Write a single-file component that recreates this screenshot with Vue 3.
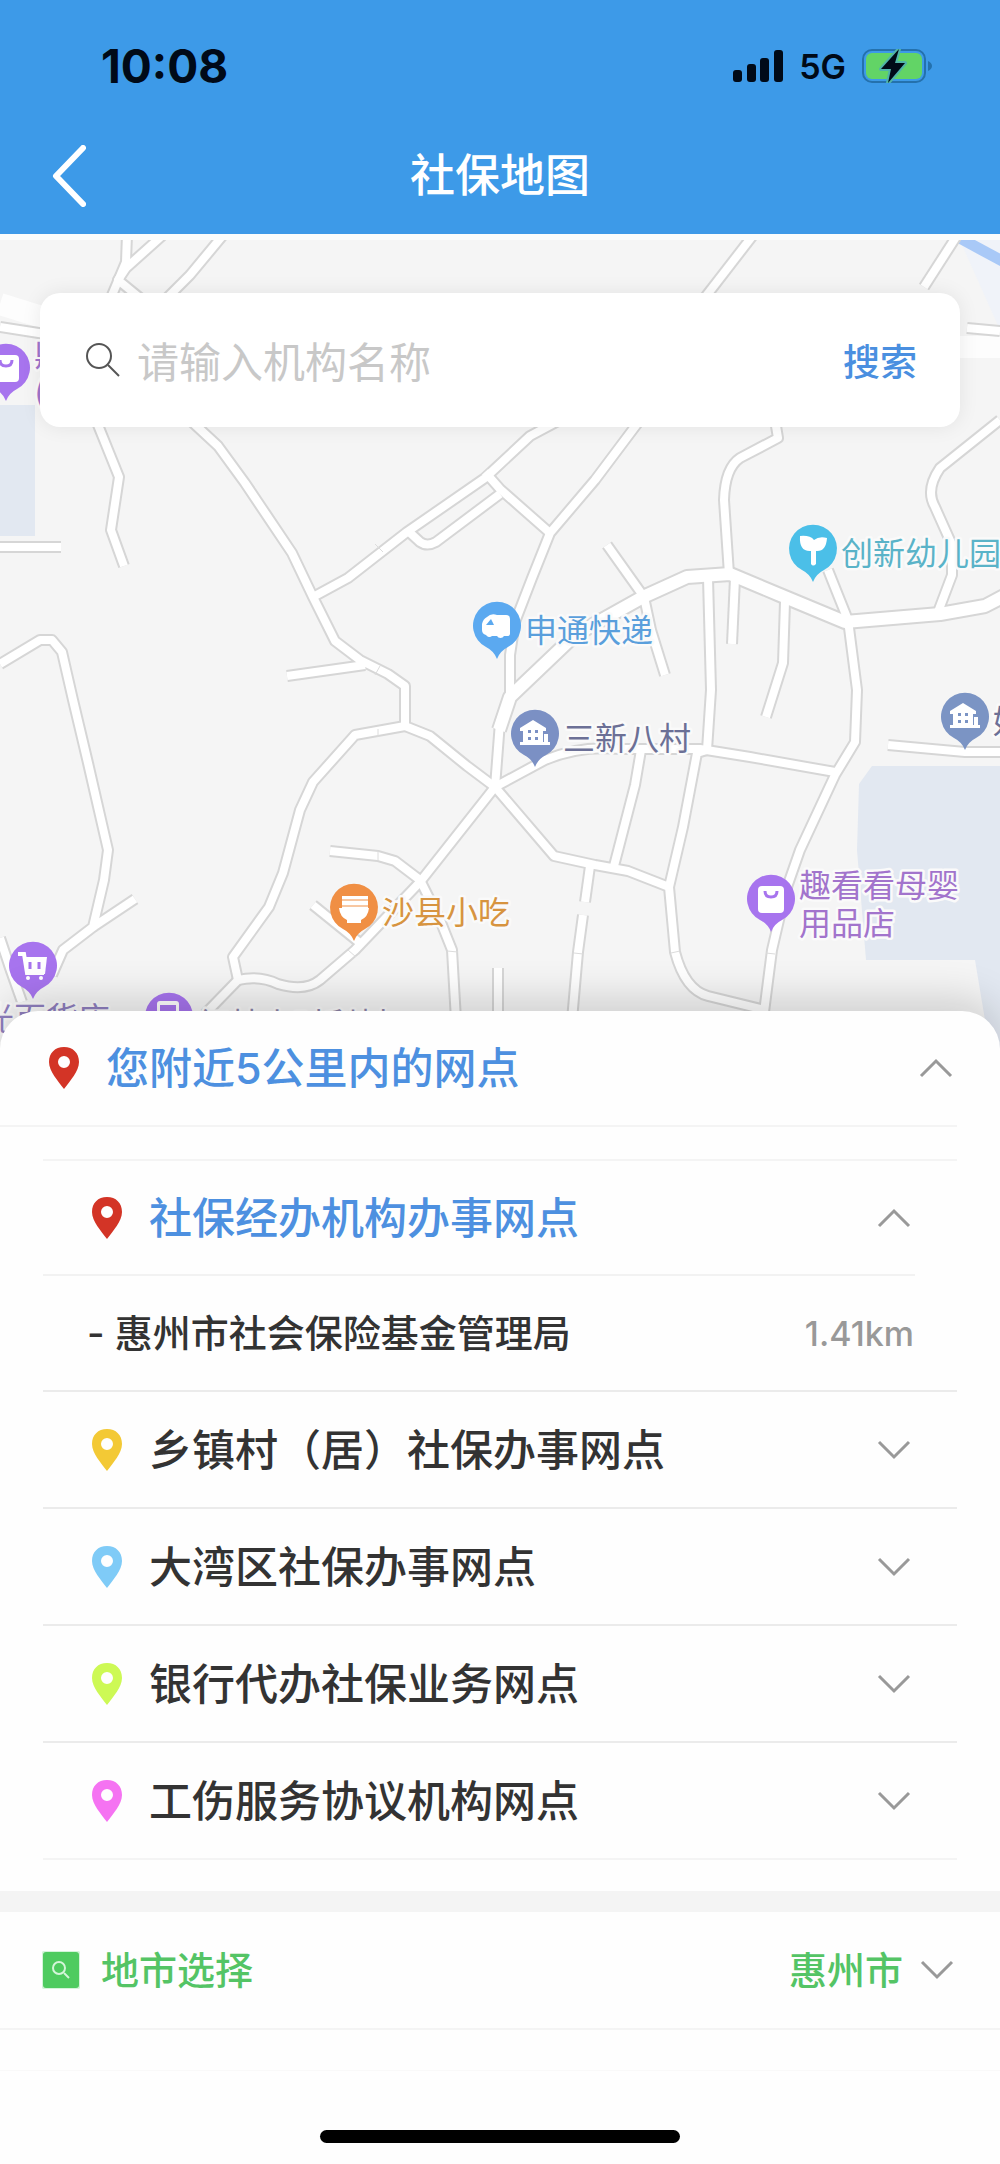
<!-- 社保地图页面：顶部导航 + 地图 + 网点列表 -->
<script setup>
    import { ref } from 'vue'

    const keyword = ref('')
    const city = ref('惠州市')
    const cities = ['惠州市', '广州市', '深圳市']

    const nearbyOpen = ref(true)//附近网点是否展开

    const groups = ref([
        { title: '社保经办机构办事网点', color: '#d33426', open: true, points: [{ name: '惠州市社会保险基金管理局', distance: '1.41km' }] },
        { title: '乡镇村（居）社保办事网点', color: '#f3c935', open: false, points: [] },
        { title: '大湾区社保办事网点', color: '#7fcbf7', open: false, points: [] },
        { title: '银行代办社保业务网点', color: '#cdf955', open: false, points: [] },
        { title: '工伤服务协议机构网点', color: '#f573f2', open: false, points: [] }
    ])

    const togglePanel = (group) => {
        group.open = !group.open
    }

    // 地图道路
    const roads = [
        'M96 420L119 477L111 530L124 566',
        'M0 547H61',
        'M190 420L218 446L245 483L292 553L313 597L335 641L360 660L388 674L405 686V726L430 736L467 766L495 787',
        'M313 597L348 578L407 532L485 478L530 436L560 420',
        'M485 472L500 489L550 533',
        'M407 530L420 542Q427 547 436 542L500 494',
        'M287 676L365 665',
        'M0 664L40 640H52L62 652L73 700L88 763L108 850L104 880L93 927L63 950L52 975',
        'M93 927L135 899',
        'M0 938L10 968L22 1002',
        'M405 726L355 735L313 782L300 810L283 873L269 907L233 957L238 980Q260 975 278 984Q305 992 320 980L355 950L420 882L495 787',
        'M238 980L205 1014',
        'M330 851L378 856L395 861L420 880L440 920L452 950L456 1020',
        'M313 905L360 943',
        'M640 420L595 480L550 533L532 578L515 622L510 655V695L500 722L495 787',
        'M607 545L644 597L651 630L665 675',
        'M775 420L778 438L740 458Q725 468 724 500L729 574',
        'M708 578L711 690L707 750L697 753L683 827L669 887',
        'M735 578L732 644',
        'M785 602L783 663L766 717',
        'M828 570L848 620L857 690L855 742L835 775L800 850L786 890L772 950L763 1020',
        'M1000 420L940 468Q925 490 935 507L952 545V575L938 612',
        'M495 787L545 760Q580 745 620 749H700L750 757L835 772',
        'M495 787L554 856L595 865L628 871L669 887L675 952Q685 990 708 996L765 1010',
        'M641 750L635 785L614 866',
        'M590 866L585 902',
        'M583 915L578 952L572 1020',
        'M888 745L965 752H1000',
        'M498 968V1020',
        'M127 234L126 262L110 300',
        'M164 234L126 268L118 280L140 298',
        'M224 234L190 275L165 300',
        'M754 234L703 300',
        'M958 234L924 287',
        'M967 328L1000 331',
        'M0 327L45 334'
    ]
    const mainRoad = 'M499 730L510 697L575 635L643 597L687 577L730 574L780 595L845 622L940 614L985 606L1004 596'

    // 道路上的分段标记
    const joints = 'M375 544L383 552M375 675L380 666M378 729V737M378 851V861M348 950L356 957M447 951L458 952M671 953L680 951M766 953L775 954M574 953L583 954'

    // 地图标注，dx、dy 为文字相对默认位置的偏移
    const places = [
        { x: 497, y: 626, type: 'truck', color: '#5ba9f0', text: '#5a9fdc', lines: ['申通快递'] },
        { x: 813, y: 549, type: 'sprout', color: '#4bbfe8', text: '#5ab3c8', lines: ['创新幼儿园'] },
        { x: 535, y: 734, type: 'house', color: '#7b90c4', text: '#6c7096', lines: ['三新八村'] },
        { x: 965, y: 717, type: 'house', color: '#7b94c4', text: '#6c7096', lines: ['好'] },
        { x: 354, y: 908, type: 'bowl', color: '#f08f44', text: '#d79440', lines: ['沙县小吃'] },
        { x: 771, y: 899, type: 'bag', color: '#a774ee', text: '#a274cc', lines: ['趣看看母婴', '用品店'] },
        { x: 6, y: 368, type: 'bag', color: '#a774ee', text: '#a274cc', lines: ['鼎', '(惠)'] },
        { x: 33, y: 966, type: 'cart', color: '#a774ee', text: '#9080c0', lines: ['光百货店'], dx: -79, dy: 48 },
        { x: 169, y: 1017, type: 'phone', color: '#a774ee', text: '#8d84a8', lines: ['红林小时利村'], dx: 0, dy: 3 }
    ]
</script>

<template>
    <div class="page">
        <header class="header">
            <div class="status-bar">
                <span class="time">10:08</span>
                <div class="status-icons">
                    <svg class="signal" viewBox="0 0 50 32" aria-hidden="true">
                        <rect x="0" y="20" width="9" height="12" rx="3" />
                        <rect x="14" y="14" width="9" height="18" rx="3" />
                        <rect x="27" y="8" width="9" height="24" rx="3" />
                        <rect x="41" y="0" width="9" height="32" rx="3" />
                    </svg>
                    <span class="network">5G</span>
                    <svg class="battery" viewBox="0 0 70 34" aria-hidden="true">
                        <rect x="1" y="1" width="62" height="32" rx="9" fill="none" stroke="#2471ad" stroke-width="2" />
                        <rect x="4" y="4" width="56" height="26" rx="6" fill="#62d466" />
                        <path d="M66 12Q70 14 70 17Q70 20 66 22Z" fill="#2471ad" />
                        <path d="M37 0L19 20H29L26 34L43 14H33Z" fill="#000a18" stroke="#4fb4a8" stroke-width="4" stroke-linejoin="round" paint-order="stroke" />
                    </svg>
                </div>
            </div>
            <nav class="nav-bar">
                <button class="back" type="button" aria-label="返回">
                    <svg viewBox="0 0 34 62" aria-hidden="true"><path d="M31 3L4 31L31 59" /></svg>
                </button>
                <h1>社保地图</h1>
            </nav>
        </header>

        <section class="map">
            <svg class="map-canvas" viewBox="0 240 1000 810" preserveAspectRatio="xMidYMin slice">
                <rect y="240" width="1000" height="810" fill="#f5f5f5" />
                <!-- 水域和地块 -->
                <path d="M0 405H35V536H0Z" fill="#e2e8f1" />
                <path d="M872 766H1000V1050H990L975 960H866L857 850L859 784Z" fill="#e2e8f1" />
                <path d="M958 236L1000 330V236Z" fill="#f0f3f9" />
                <path d="M956 236L1004 262" stroke="#a9c9f7" stroke-width="11" />
                <path d="M0 304L45 318M955 347H1000" stroke="#fdfdfd" stroke-width="22" />

                <g class="road-edge">
                    <path v-for="d in roads" :key="d" :d="d" />
                    <path class="wide" :d="mainRoad" />
                </g>
                <g class="road-fill">
                    <path v-for="d in roads" :key="d" :d="d" />
                    <path class="wide" :d="mainRoad" />
                </g>
                <path :d="joints" stroke="#dcdcdc" stroke-width="1" />

                <g v-for="p in places" :key="p.x" :transform="`translate(${p.x} ${p.y})`">
                    <path d="M0 33Q-3 25 -11 21A24 24 0 1 1 11 21Q3 25 0 33Z" :fill="p.color" />
                    <g v-if="p.type === 'truck'" fill="#fff">
                        <path d="M0 -11H9Q13 -11 13 -7V8Q13 10 10 10H7A4 4 0 0 1 0 10H-5A4 4 0 0 1 -11 9Q-15 8 -15 4V-2Q-14 -7 -10 -9Q-6 -13 0 -11Z" />
                        <path d="M-11 -1L-6 -7L-3 -1Z" :fill="p.color" />
                    </g>
                    <path v-else-if="p.type === 'sprout'" fill="#fff" d="M-13 -13Q-3 -14 1 -9Q6 -13 14 -11Q13 3 3 2V15Q0 18 -2 15V2Q-14 3 -13 -13Z" />
                    <g v-else-if="p.type === 'house'">
                        <path d="M-15 -6L-2 -14L11 -6V-3H8V8H9V0H13V8H15V11H-15V8H-12V-3H-15Z" fill="#fff" />
                        <path d="M-7 -4H-4V-1H-7ZM0 -4H3V-1H0ZM-7 3H-4V6H-7ZM0 3H3V6H0Z" :fill="p.color" />
                    </g>
                    <g v-else-if="p.type === 'bowl'">
                        <path d="M-12 -12H14V0H15Q14 9 7 12V15H-7V12Q-14 9 -15 0H-12Z" fill="#fff" />
                        <path d="M-12 -8H14M-12 -2H14" :stroke="p.color" stroke-width="1" />
                    </g>
                    <g v-else-if="p.type === 'bag'">
                        <rect x="-13" y="-13" width="26" height="27" rx="4" fill="#fff" />
                        <path d="M-6 -8Q-6 -2 0 -2Q6 -2 6 -8" fill="none" :stroke="p.color" stroke-width="3" />
                    </g>
                    <g v-else-if="p.type === 'cart'">
                        <path d="M-15 -12H-9L-6 7H11" fill="none" stroke="#fff" stroke-width="4" />
                        <path d="M-9 -9H14L12 8H-6Z" fill="#fff" />
                        <path d="M-3 -4V3M6 -4V3" :stroke="p.color" stroke-width="3" />
                        <circle cx="-5" cy="12" r="2" fill="#fff" />
                        <circle cx="8" cy="12" r="2" fill="#fff" />
                    </g>
                    <g v-else>
                        <rect x="-12" y="-16" width="22" height="32" rx="3" fill="#fff" />
                        <rect x="-9" y="-12" width="16" height="20" :fill="p.color" />
                    </g>
                    <text v-for="(line, i) in p.lines"
                          :key="line"
                          :x="28 + (p.dx || 0)"
                          :y="(p.lines.length > 1 ? -2 : 16) + i * 38 + (p.dy || 0)"
                          :fill="p.text">{{ line }}</text>
                </g>
            </svg>

            <form class="search" @submit.prevent>
                <svg class="search-icon" viewBox="0 0 36 36" aria-hidden="true">
                    <circle cx="14" cy="14" r="12" />
                    <path d="M23 23L34 34" />
                </svg>
                <input v-model="keyword" type="text" placeholder="请输入机构名称" aria-label="机构名称">
                <button type="submit">搜索</button>
            </form>
        </section>

        <main class="sheet">
            <button class="row nearby" type="button" :aria-expanded="nearbyOpen" @click="nearbyOpen = !nearbyOpen">
                <svg class="pin" viewBox="0 0 30 42" aria-hidden="true">
                    <path fill="#d33426" fill-rule="evenodd" d="M15 0C6 0 0 6 0 15C0 24 9 34 15 42C21 34 30 24 30 15C30 6 24 0 15 0ZM15 9A6 6 0 1 1 15 21A6 6 0 1 1 15 9Z" />
                </svg>
                <span class="title active">您附近5公里内的网点</span>
                <svg class="arrow" :class="{ rotated: nearbyOpen }" viewBox="0 0 34 20" aria-hidden="true"><path d="M2 2L17 17L32 2" /></svg>
            </button>

            <div v-if="nearbyOpen" class="groups">
                <div v-for="group in groups" :key="group.title" class="group">
                    <button class="row" :class="{ opened: group.open }" type="button" :aria-expanded="group.open" @click="togglePanel(group)">
                        <svg class="pin" viewBox="0 0 30 42" aria-hidden="true">
                            <path :fill="group.color" fill-rule="evenodd" d="M15 0C6 0 0 6 0 15C0 24 9 34 15 42C21 34 30 24 30 15C30 6 24 0 15 0ZM15 9A6 6 0 1 1 15 21A6 6 0 1 1 15 9Z" />
                        </svg>
                        <span class="title" :class="{ active: group.open }">{{ group.title }}</span>
                        <svg class="arrow" :class="{ rotated: group.open }" viewBox="0 0 34 20" aria-hidden="true"><path d="M2 2L17 17L32 2" /></svg>
                    </button>
                    <template v-if="group.open">
                        <div v-for="point in group.points" :key="point.name" class="point">
                            <span class="name">- {{ point.name }}</span>
                            <span class="distance">{{ point.distance }}</span>
                        </div>
                    </template>
                </div>
            </div>

            <div class="city">
                <svg class="city-icon" viewBox="0 0 38 38" aria-hidden="true">
                    <rect width="38" height="38" rx="4" fill="#4ecb5f" />
                    <circle cx="17" cy="17" r="6" />
                    <path d="M22 22L27 27" />
                </svg>
                <label for="city">地市选择</label>
                <select id="city" v-model="city">
                    <option v-for="c in cities" :key="c">{{ c }}</option>
                </select>
                <svg class="arrow" viewBox="0 0 34 20" aria-hidden="true"><path d="M2 2L17 17L32 2" /></svg>
            </div>
            <div class="city-list"></div>
        </main>

        <footer class="home">
            <div class="home-indicator"></div>
        </footer>
    </div>
</template>

<style>
    body {
        margin: 0;
        background: #fefefe;
    }
</style>

<style scoped>
    .page {
        font-family: Inter, "Noto Sans CJK SC", sans-serif;
        color: #333;
        background: #fefefe;
    }

    button, input, select {
        font-family: inherit;
        border: 0;
        padding: 0;
        margin: 0;
        background: none;
    }

    .header {
        background: #3d9ae8;
        padding-bottom: 14px;
    }

    .status-bar {
        display: flex;
        align-items: center;
        justify-content: space-between;
        height: 132px;
        padding: 0 68px 0 101px;
        color: #000a18;
    }

    .time {
        font-size: 46px;
        font-weight: 700;
    }

    .status-icons {
        display: flex;
        align-items: center;
        gap: 16px;
    }

    .signal {
        width: 50px;
        height: 32px;
        fill: #000a18;
    }

    .network {
        font-size: 34px;
        font-weight: 600;
    }

    .battery {
        width: 70px;
        height: 34px;
    }

    .nav-bar {
        display: grid;
        grid-template-columns: 1fr auto 1fr;
        align-items: center;
        height: 88px;
        padding: 0 52px;
    }

    .nav-bar h1 {
        margin: 0;
        color: #fff;
        font-size: 45px;
        font-weight: 500;
        line-height: 60px;
    }

    .back {
        justify-self: start;
        display: flex;
        cursor: pointer;
    }

        .back svg {
            width: 34px;
            height: 62px;
            fill: none;
            stroke: #fff;
            stroke-width: 6;
            stroke-linecap: round;
            stroke-linejoin: round;
        }

    .map {
        display: grid;
        height: 810px;
        border-top: 6px solid #f9fcfc;
        overflow: hidden;
    }

    .map-canvas {
        grid-area: 1 / 1;
        width: 100%;
        height: 810px;
    }

        .map-canvas text {
            font-size: 32px;
            stroke: #fafafa;
            stroke-width: 5px;
            stroke-linejoin: round;
            paint-order: stroke;
        }

    .road-edge, .road-fill {
        fill: none;
        stroke: #d6d6d6;
        stroke-width: 12;
        stroke-linejoin: round;
    }

    .road-fill {
        stroke: #fff;
        stroke-width: 8;
    }

    .road-edge .wide {
        stroke-width: 16;
    }

    .road-fill .wide {
        stroke-width: 12;
    }

    .search {
        grid-area: 1 / 1;
        align-self: start;
        display: flex;
        align-items: center;
        height: 134px;
        margin: 53px 40px 0;
        padding: 0 43px 0 45px;
        box-sizing: border-box;
        border-radius: 20px;
        background: #fff;
        box-shadow: 0 0 20px rgba(0, 0, 0, 0.08);
        z-index: 1;
    }

    .search-icon {
        width: 36px;
        height: 36px;
        flex: none;
        fill: none;
        stroke: #555;
        stroke-width: 2;
    }

    .search input {
        flex: 1;
        min-width: 0;
        margin-left: 16px;
        padding-top: 6px;
        font-size: 42px;
        line-height: 60px;
        color: #333;
        outline: none;
    }

        .search input::placeholder {
            color: #c8c8c8;
            opacity: 1;
        }

    .search button {
        color: #4a8fe0;
        font-size: 37px;
        font-weight: 500;
        cursor: pointer;
    }

    .sheet {
        position: relative;
        margin-top: -39px;
        border-radius: 38px 38px 0 0;
        background: #fefefe;
        box-shadow: 0 -12px 40px rgba(0, 0, 0, 0.16);
    }

    .row {
        display: flex;
        align-items: center;
        width: 100%;
        height: 115px;
        box-sizing: content-box;
        text-align: left;
        cursor: pointer;
    }

    .nearby {
        width: auto;
        min-width: calc(100% - 92px);
        height: 114px;
        padding-left: 49px;
        border-bottom: 2px solid #f4f4f4;
    }

    .pin {
        width: 30px;
        height: 42px;
        flex: none;
    }

    .title {
        flex: 1;
        margin-left: 27px;
        color: #333;
        font-size: 43px;
        font-weight: 500;
        line-height: 60px;
    }

        .title.active {
            color: #4d90e0;
        }

    .arrow {
        width: 34px;
        height: 20px;
        flex: none;
        fill: none;
        stroke: #999;
        stroke-width: 3;
    }

    .nearby .arrow {
        margin-right: 4px;
    }

    .rotated {
        transform: rotate(180deg);
    }

    .groups {
        margin: 32px 43px 0;
        padding-bottom: 31px;
        border-top: 2px solid #f4f4f4;
    }

    .group {
        border-bottom: 2px solid #ebebeb;
    }

        .group:last-child {
            border-bottom-color: #f4f4f4;
        }

        .group .row {
            box-sizing: border-box;
            padding: 0 46px 0 49px;
        }

        .group .opened {
            width: calc(100% - 42px);
            padding-right: 4px;
            border-bottom: 2px solid #f2f2f2;
        }

    .point {
        display: flex;
        align-items: center;
        justify-content: space-between;
        height: 114px;
        padding: 0 43px 0 44px;
        font-size: 38px;
        font-weight: 500;
    }

        .point .name {
            padding-bottom: 6px;
        }

    .distance {
        color: #999;
        font-size: 34px;
    }

    .city {
        display: flex;
        align-items: center;
        height: 116px;
        padding: 0 46px 0 42px;
        border-top: 21px solid #f4f4f4;
        border-bottom: 2px solid #f4f4f4;
        color: #54c465;
        font-size: 38px;
        font-weight: 500;
    }

    .city-icon {
        width: 38px;
        height: 38px;
        fill: none;
        stroke: #d4f5d9;
        stroke-width: 2;
    }

    .city label {
        flex: 1;
        margin-left: 21px;
        padding-bottom: 6px;
    }

    .city select {
        appearance: none;
        margin-right: 17px;
        color: #54c465;
        font-size: 38px;
        font-weight: 500;
        text-align-last: right;
        cursor: pointer;
    }

    .city-list {
        height: 40px;
        border-bottom: 1px solid #f9f9f9;
    }

    .home {
        position: relative;
        display: flex;
        justify-content: center;
        padding: 59px 0 21px;
        background: #fefefe;
    }

    .home-indicator {
        width: 36%;
        height: 13px;
        border-radius: 7px;
        background: #000;
    }
</style>
